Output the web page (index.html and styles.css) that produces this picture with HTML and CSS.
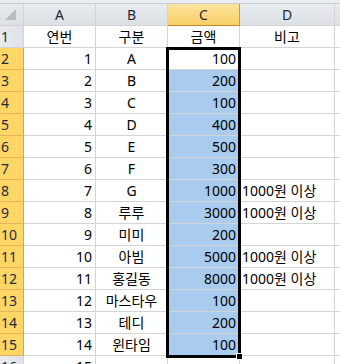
FILE: index.html
```html
<!DOCTYPE html>
<html lang="ko">
<head>
<meta charset="utf-8">
<link rel="stylesheet" href="styles.css">
</head>
<body>
<div class="band"></div>
<div class="sheet">
  <div class="corner"><svg width="23" height="21" viewBox="0 0 23 21"><polygon points="5,16 16,5 16,16" fill="#b9bdc3"/></svg></div>
  <div class="hdr">A</div><div class="hdr">B</div><div class="hdr hsel">C</div><div class="hdr">D</div><div class="hdr"></div>

  <div class="rh">1</div><div class="c ctr">연번</div><div class="c ctr">구분</div><div class="c ctr">금액</div><div class="c ctr">비고</div><div class="c"></div>
  <div class="rh rsel">2</div><div class="c num">1</div><div class="c ctr">A</div><div class="c num">100</div><div class="c"></div><div class="c"></div>
  <div class="rh rsel">3</div><div class="c num">2</div><div class="c ctr">B</div><div class="c num sel">200</div><div class="c"></div><div class="c"></div>
  <div class="rh rsel">4</div><div class="c num">3</div><div class="c ctr">C</div><div class="c num sel">100</div><div class="c"></div><div class="c"></div>
  <div class="rh rsel">5</div><div class="c num">4</div><div class="c ctr">D</div><div class="c num sel">400</div><div class="c"></div><div class="c"></div>
  <div class="rh rsel">6</div><div class="c num">5</div><div class="c ctr">E</div><div class="c num sel">500</div><div class="c"></div><div class="c"></div>
  <div class="rh rsel">7</div><div class="c num">6</div><div class="c ctr">F</div><div class="c num sel">300</div><div class="c"></div><div class="c"></div>
  <div class="rh rsel">8</div><div class="c num">7</div><div class="c ctr">G</div><div class="c num sel">1000</div><div class="c txt">1000원 이상</div><div class="c"></div>
  <div class="rh rsel">9</div><div class="c num">8</div><div class="c ctr">루루</div><div class="c num sel">3000</div><div class="c txt">1000원 이상</div><div class="c"></div>
  <div class="rh rsel">10</div><div class="c num">9</div><div class="c ctr">미미</div><div class="c num sel">200</div><div class="c"></div><div class="c"></div>
  <div class="rh rsel">11</div><div class="c num">10</div><div class="c ctr">아빔</div><div class="c num sel">5000</div><div class="c txt">1000원 이상</div><div class="c"></div>
  <div class="rh rsel">12</div><div class="c num">11</div><div class="c ctr">홍길동</div><div class="c num sel">8000</div><div class="c txt">1000원 이상</div><div class="c"></div>
  <div class="rh rsel">13</div><div class="c num">12</div><div class="c ctr">마스타우</div><div class="c num sel">100</div><div class="c"></div><div class="c"></div>
  <div class="rh rsel">14</div><div class="c num">13</div><div class="c ctr">테디</div><div class="c num sel">200</div><div class="c"></div><div class="c"></div>
  <div class="rh rsel">15</div><div class="c num">14</div><div class="c ctr">윈타임</div><div class="c num sel">100</div><div class="c"></div><div class="c"></div>
  <div class="rh">16</div><div class="c num">15</div><div class="c"></div><div class="c"></div><div class="c"></div><div class="c"></div>

  <div class="selbox"><div class="handle"></div></div>
</div>
</body>
</html>
```
FILE: styles.css
```css
html, body {
  margin: 0;
  padding: 0;
  background: #ffffff;
  overflow: hidden;
}
body {
  width: 340px;
  height: 364px;
  font-family: "Noto Sans", "Noto Sans CJK KR", sans-serif;
  font-size: 14px;
  color: #000;
}
.band {
  height: 3px;
  background: #e9edf2;
  border-bottom: 1px solid #c6ccd4;
}
.sheet {
  position: relative;
  display: grid;
  grid-template-columns: 24px 72px 72px 72px 95px 20px;
  grid-auto-rows: 22px;
}
.sheet > div:not(.selbox) {
  box-sizing: border-box;
  border-right: 1px solid #d4d4d4;
  border-bottom: 1px solid #d4d4d4;
  display: flex;
  align-items: center;
  line-height: 1;
  white-space: nowrap;
  overflow: hidden;
}
.sheet > .corner {
  background: linear-gradient(#e6e9ee, #dcdfe4);
  border-right: 1px solid #a9aeb5;
  border-bottom: 1px solid #a9aeb5;
}
.corner svg { display: block; }
.sheet > .hdr {
  justify-content: center;
  background: linear-gradient(#e8ebef, #dcdfe4);
  border-right: 1px solid #aeb3ba;
  border-bottom: 1px solid #9ea4ac;
  color: #1f2a3a;
  padding-top: 1px;
}
.sheet > .hdr.hsel {
  background: linear-gradient(#fde4a0, #f8cf66);
  border-right: 1px solid #c99a44;
  border-bottom: 1px solid #c28a30;
}
.sheet > .rh {
  background: linear-gradient(90deg, #e8ebef, #dee1e6);
  border-right: 1px solid #aeb3ba;
  border-bottom: 1px solid #c5c9cf;
  color: #1f2a3a;
  padding-left: 1px;
}
.sheet > .rh.rsel {
  background: #fed665;
  border-right: 1px solid #d9a344;
  border-bottom: 1px solid #e6b35a;
}
.ctr { justify-content: center; }
.num { justify-content: flex-end; padding-right: 3px; }
.txt { justify-content: flex-start; padding-left: 2px; overflow: visible !important; }
.sheet > .sel { background: #a8cbee; }
.selbox {
  position: absolute;
  left: 166px;
  top: 43px;
  width: 75px;
  height: 311px;
  box-sizing: border-box;
  border: 3px solid #000;
  pointer-events: none;
}
.handle {
  position: absolute;
  right: -5px;
  bottom: -5px;
  width: 5px;
  height: 5px;
  background: #000;
  border: 1px solid #fff;
}
```
